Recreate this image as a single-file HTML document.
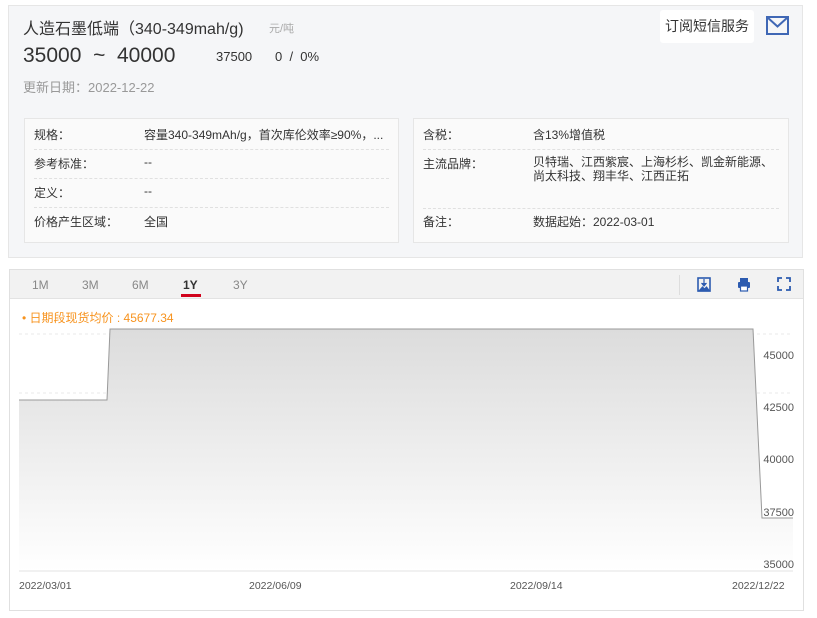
<!DOCTYPE html>
<html><head><meta charset="utf-8"><style>
*{margin:0;padding:0;box-sizing:border-box}
body{width:817px;height:618px;background:#fff;font-family:"Liberation Sans","Noto Sans CJK SC",sans-serif;position:relative;overflow:hidden;color:#333}
.card{position:absolute;left:8px;top:5px;width:795px;height:253px;background:#f5f6f8;border:1px solid #e6e6e6}
.abs{position:absolute;white-space:nowrap}
.tbl{position:absolute;top:112px;height:125px;background:#fafafa;border:1px solid #e6e6e6;font-size:12px;color:#333}
.line{position:absolute;left:9px;right:9px;border-top:1px dashed #e0e0e0;height:0}
.chart{position:absolute;left:9px;top:269px;width:795px;height:342px;border:1px solid #e0e0e0;background:#fff}
.bar{position:absolute;left:0;top:0;width:100%;height:29px;background:#f2f2f2;border-bottom:1px solid #e3e3e3;font-size:12px;color:#888}
</style></head><body>
<div class="card">
 <div class="abs" style="left:14px;top:9px;font-size:16px;color:#333">人造石墨低端（340-349mah/g)</div>
 <div class="abs" style="left:260px;top:14px;font-size:11px;color:#aaa">元/吨</div>
 <div class="abs" style="left:14px;top:38px;font-size:21px;color:#333;white-space:pre">35000  ~  40000</div>
 <div class="abs" style="left:207px;top:43px;font-size:13px;color:#333">37500</div>
 <div class="abs" style="left:266px;top:43px;font-size:13px;color:#333;white-space:pre">0  /  0%</div>
 <div class="abs" style="left:14px;top:71px;font-size:13px;color:#999">更新日期：2022-12-22</div>
 <div class="abs" style="left:651px;top:4px;width:94px;height:33px;background:#fff;border-radius:3px;font-size:14px;color:#333;line-height:33px;text-align:center">订阅短信服务</div>
 <svg class="abs" style="left:757px;top:10px" width="23" height="19" viewBox="0 0 23 19"><rect x="1" y="1" width="21" height="17" fill="none" stroke="#3f67b5" stroke-width="2"/><path d="M1 1 L11.5 10.5 L22 1" fill="none" stroke="#3f67b5" stroke-width="2"/></svg>
 <div class="tbl" style="left:15px;width:375px">
  <div class="line" style="top:30px"></div><div class="line" style="top:59px"></div><div class="line" style="top:88px"></div>
  <div class="abs" style="left:9px;top:7px">规格：</div><div class="abs" style="left:119px;top:7px">容量340-349mAh/g，首次库伦效率≥90%，...</div>
  <div class="abs" style="left:9px;top:36px">参考标准：</div><div class="abs" style="left:119px;top:36px">--</div>
  <div class="abs" style="left:9px;top:65px">定义：</div><div class="abs" style="left:119px;top:65px">--</div>
  <div class="abs" style="left:9px;top:94px">价格产生区域：</div><div class="abs" style="left:119px;top:94px">全国</div>
 </div>
 <div class="tbl" style="left:404px;width:376px">
  <div class="line" style="top:30px"></div><div class="line" style="top:89px"></div>
  <div class="abs" style="left:9px;top:7px">含税：</div><div class="abs" style="left:119px;top:7px">含13%增值税</div>
  <div class="abs" style="left:9px;top:36px">主流品牌：</div><div class="abs" style="left:119px;top:36px;line-height:14px">贝特瑞、江西紫宸、上海杉杉、凯金新能源、<br>尚太科技、翔丰华、江西正拓</div>
  <div class="abs" style="left:9px;top:94px">备注：</div><div class="abs" style="left:119px;top:94px">数据起始：2022-03-01</div>
 </div>
</div>
<div class="chart">
 <div class="bar">
  <div class="abs" style="left:22px;top:8px">1M</div>
  <div class="abs" style="left:72px;top:8px">3M</div>
  <div class="abs" style="left:122px;top:8px">6M</div>
  <div class="abs" style="left:173px;top:8px;color:#333;font-weight:bold">1Y</div>
  <div class="abs" style="left:171px;top:24px;width:20px;height:3px;background:#d0021b"></div>
  <div class="abs" style="left:223px;top:8px">3Y</div>
  <div class="abs" style="left:669px;top:5px;width:1px;height:20px;background:#ddd"></div>
  <svg class="abs" style="left:687px;top:7px" width="14" height="15" viewBox="0 0 14 15"><rect x="1" y="1" width="12" height="13" fill="none" stroke="#2c5bb0" stroke-width="1.6"/><path d="M7 2v6M4.5 6l2.5 3 2.5-3M2 14l3.5-4 2 2 2-2 3 4z" stroke="#2c5bb0" fill="#2c5bb0" stroke-width="1.2"/></svg>
  <svg class="abs" style="left:727px;top:7px" width="14" height="15" viewBox="0 0 14 15"><rect x="3" y="1" width="8" height="4" fill="#2c5bb0"/><rect x="1" y="5" width="12" height="6" rx="1" fill="#2c5bb0"/><rect x="3.5" y="9" width="7" height="5" fill="#fff" stroke="#2c5bb0" stroke-width="1.2"/></svg>
  <svg class="abs" style="left:767px;top:7px" width="14" height="14" viewBox="0 0 14 14"><path d="M1 5V1h4M9 1h4v4M13 9v4H9M5 13H1V9" fill="none" stroke="#2c5bb0" stroke-width="1.8"/></svg>
 </div>
 <svg class="abs" style="left:0;top:30px" width="795" height="311" viewBox="0 0 795 311">
  <defs><linearGradient id="g" x1="0" y1="0" x2="0" y2="1"><stop offset="0" stop-color="#dcdcdc"/><stop offset="1" stop-color="#fff"/></linearGradient></defs>
  <path d="M9 34H783M9 93H783" stroke="#e8e8e8" stroke-dasharray="3,3"/>
  <path d="M9 100H97L100 29H743L752 218H783V271H9Z" fill="url(#g)"/>
  <path d="M9 100H97L100 29H743L752 218H783" fill="none" stroke="#999" stroke-width="1"/>
  <path d="M9 271H783" stroke="#e3e3e3"/>
  <text x="12" y="22" font-size="12" fill="#f7931e" font-family="Liberation Sans,Noto Sans CJK SC,sans-serif">• 日期段现货均价 : 45677.34</text>
  <g font-size="11" fill="#555" font-family="Liberation Sans,sans-serif" text-anchor="end">
   <text x="784" y="59">45000</text><text x="784" y="111">42500</text><text x="784" y="163">40000</text><text x="784" y="216">37500</text><text x="784" y="268">35000</text>
  </g>
  <g font-size="10.5" fill="#555" font-family="Liberation Sans,sans-serif">
   <text x="9" y="289">2022/03/01</text><text x="239" y="289">2022/06/09</text><text x="500" y="289">2022/09/14</text><text x="722" y="289">2022/12/22</text>
  </g>
 </svg>
</div>
</body></html>
